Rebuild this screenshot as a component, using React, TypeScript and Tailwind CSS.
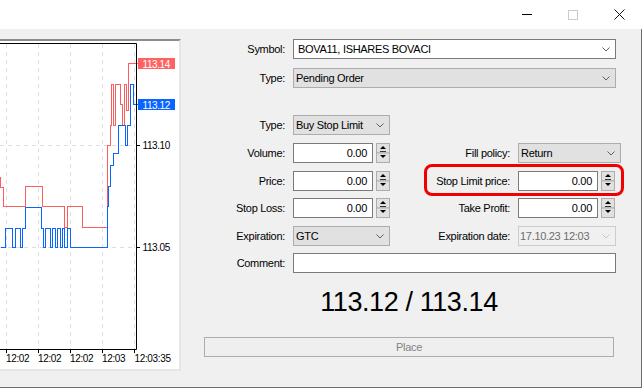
import React from 'react';

const redPath =
    'M0 176 V187 H3 V206 H25 V186 H42 V206 H64 V227 H67 V206 H82 V227 H107 V145 H110 V125 H111 V84 H113 V125 H115 V84 H120 V104 H122 V125 H124 V84 H126 V110 H128 V63 H138';

const bluePath =
    'M0 247 H5 V228 H12 V247 H15 V228 H20 V247 H22 V228 H25 V207 H41 V228 H43 V247 H45 V228 H50 V247 H52 V228 H55 V247 H57 V228 H60 V247 H62 V228 H64 V247 H67 V228 H70 V247 H107 V206 H108 V186 H110 V165 H113 V153 H118 V125 H125 V145 H127 V125 H130 V84 H133 V104 H138';

const gridX = [6, 38, 70, 102, 134];
const timeLabels = [
    { x: 6, t: '12:02' },
    { x: 38, t: '12:02' },
    { x: 70, t: '12:02' },
    { x: 102, t: '12:03' },
    { x: 134.5, t: '12:03:35' },
];

const Chart = (): JSX.Element => {
    return (
        <div className="mt-[10px] h-[332px] w-[181px] shrink-0 border-t-2 border-r-2 border-b-2 border-t-[#8c8c8c] border-r-[#e6e6e6] border-b-[#e6e6e6] bg-white">
            <svg width="179" height="328" viewBox="0 41 179 328" fontFamily="Liberation Sans, Arial, sans-serif">
                {gridX.map((x) => (
                    <line key={x} x1={x + 0.5} y1="44" x2={x + 0.5} y2="349" stroke="#dcdcdc" strokeDasharray="4 4" />
                ))}
                <line x1="0" y1="145.5" x2="136" y2="145.5" stroke="#dcdcdc" strokeDasharray="4 4" />
                <line x1="0" y1="247.5" x2="136" y2="247.5" stroke="#dcdcdc" strokeDasharray="4 4" />

                <g transform="translate(0.5 0.5)" shapeRendering="crispEdges">
                    <path d={redPath} fill="none" stroke="#ff5c5c" strokeWidth="1" />
                    <path d={bluePath} fill="none" stroke="#0a64ff" strokeWidth="1" />
                </g>

                <path d="M0 43.5 H136.5 V349.5 H0" fill="none" stroke="#000" />
                {gridX.map((x) => (
                    <line key={'t' + x} x1={x + 0.5} y1="349" x2={x + 0.5} y2="353" stroke="#000" />
                ))}
                <line x1="136" y1="145.5" x2="140" y2="145.5" stroke="#000" />
                <line x1="136" y1="247.5" x2="140" y2="247.5" stroke="#000" />

                <rect x="138" y="58" width="37" height="11" fill="#ff6262" />
                <text x="142.5" y="67.5" fontSize="10" letterSpacing="-0.4" fill="#fff">113.14</text>
                <rect x="138" y="99" width="37" height="11" fill="#0a64ff" />
                <text x="142.5" y="108.5" fontSize="10" letterSpacing="-0.4" fill="#fff">113.12</text>
                <text x="142.5" y="149" fontSize="10" letterSpacing="-0.4" fill="#000">113.10</text>
                <text x="142.5" y="251" fontSize="10" letterSpacing="-0.4" fill="#000">113.05</text>

                {timeLabels.map((l) => (
                    <text key={l.x} x={l.x} y="362" fontSize="10" letterSpacing="-0.35" fill="#000">
                        {l.t}
                    </text>
                ))}
            </svg>
        </div>
    );
};

const Chevron = ({ disabled }: { disabled?: boolean }): JSX.Element => (
    <svg width="8" height="5" viewBox="0 0 8 5" className="shrink-0">
        <path d="M0.5 0.5 L4 4 L7.5 0.5" fill="none" stroke={disabled ? '#c6c6c6' : '#5f5f5f'} />
    </svg>
);

const Spinner = (): JSX.Element => (
    <svg width="14" height="20" viewBox="0 0 14 20" className="ml-[3px] shrink-0">
        <rect x="0.5" y="0.5" width="13" height="9.5" fill="#e1e1e1" stroke="#adadad" />
        <rect x="0.5" y="10" width="13" height="9.5" fill="#e1e1e1" stroke="#adadad" />
        <polygon points="4,6 10,6 7,3" fill="#000" />
        <rect x="4" y="8" width="6" height="1" fill="#333" />
        <polygon points="4,12 10,12 7,15" fill="#000" />
    </svg>
);

class ComboProps {
    value: string;
    className: string;
}

const WhiteCombo = ({ value, className }: ComboProps): JSX.Element => (
    <div className={'flex h-[20px] items-center justify-between border border-[#7a7a7a] bg-white pl-[4px] pr-[5px] ' + className}>
        <span>{value}</span>
        <Chevron />
    </div>
);

const GrayCombo = ({ value, className }: ComboProps): JSX.Element => (
    <div className={'flex h-[20px] items-center justify-between border border-[#adadad] bg-[#e1e1e1] pl-[2px] pr-[5px] ' + className}>
        <span>{value}</span>
        <Chevron />
    </div>
);

const DisabledCombo = ({ value, className }: ComboProps): JSX.Element => (
    <div className={'flex h-[20px] items-center justify-between border border-[#cccccc] bg-[#f0f0f0] pl-[1px] pr-[5px] text-[#6d6d6d] ' + className}>
        <span>{value}</span>
        <Chevron disabled />
    </div>
);

const NumField = ({ value }: { value: string }): JSX.Element => (
    <div className="flex items-center">
        <div className="flex h-[20px] w-[80px] items-center justify-end border border-[#7a7a7a] bg-white pr-[5px]">{value}</div>
        <Spinner />
    </div>
);

const Label = ({ children }: { children: React.ReactNode }): JSX.Element => (
    <div className="w-[85px] shrink-0 text-right">{children}</div>
);

const RightLabel = ({ children }: { children: React.ReactNode }): JSX.Element => (
    <div className="w-[128px] shrink-0 pr-[8px] text-right">{children}</div>
);

const Row = ({ className, children }: { className: string; children: React.ReactNode }): JSX.Element => (
    <div className={'flex h-[20px] items-center ' + className}>{children}</div>
);

const TitleBar = (): JSX.Element => (
    <div className="flex h-[29px] justify-end bg-white">
        <div className="flex w-[46px] items-center justify-center">
            <div className="h-px w-[10px] bg-black" />
        </div>
        <div className="flex w-[46px] items-center justify-center">
            <div className="h-[10px] w-[10px] border border-[#cccccc]" />
        </div>
        <div className="flex w-[46px] items-center justify-center">
            <svg width="11" height="11" viewBox="0 0 11 11">
                <path d="M0.5 0.5 L10.5 10.5 M10.5 0.5 L0.5 10.5" stroke="#111" />
            </svg>
        </div>
    </div>
);

export default function App(): JSX.Element {
    return (
        <div className="h-[388px] w-[642px] overflow-hidden bg-[#f0f0f0] font-['Liberation_Sans',Arial,sans-serif] text-[11px] tracking-[-0.3px] text-black">
            <TitleBar />
            <div className="flex h-[359px] border-r border-b border-[#6d6d6d]">
                <Chart />
                <div className="ml-[19px] mt-[10px] flex flex-col">
                    <Row className="">
                        <Label>Symbol:</Label>
                        <WhiteCombo value="BOVA11, ISHARES BOVACI" className="ml-[8px] w-[323px]" />
                    </Row>
                    <Row className="mt-[9px]">
                        <Label>Type:</Label>
                        <GrayCombo value="Pending Order" className="ml-[8px] w-[323px]" />
                    </Row>
                    <Row className="mt-[27px]">
                        <Label>Type:</Label>
                        <GrayCombo value="Buy Stop Limit" className="ml-[8px] w-[97px]" />
                    </Row>
                    <Row className="mt-[8px]">
                        <Label>Volume:</Label>
                        <div className="ml-[8px]">
                            <NumField value="0.00" />
                        </div>
                        <RightLabel>Fill policy:</RightLabel>
                        <GrayCombo value="Return" className="w-[103px]" />
                    </Row>
                    <Row className="mt-[8px]">
                        <Label>Price:</Label>
                        <div className="ml-[8px]">
                            <NumField value="0.00" />
                        </div>
                        <div className="relative flex items-center">
                            <RightLabel>Stop Limit price:</RightLabel>
                            <NumField value="0.00" />
                            <div className="pointer-events-none absolute left-[34px] top-[-7px] h-[32px] w-[200px] rounded-[8px] border-[3px] border-[#f00000]" />
                        </div>
                    </Row>
                    <Row className="mt-[7px]">
                        <Label>Stop Loss:</Label>
                        <div className="ml-[8px]">
                            <NumField value="0.00" />
                        </div>
                        <RightLabel>Take Profit:</RightLabel>
                        <NumField value="0.00" />
                    </Row>
                    <Row className="mt-[8px]">
                        <Label>Expiration:</Label>
                        <GrayCombo value="GTC" className="ml-[8px] w-[97px]" />
                        <RightLabel>Expiration date:</RightLabel>
                        <DisabledCombo value="17.10.23 12:03" className="w-[98px]" />
                    </Row>
                    <Row className="mt-[7px]">
                        <Label>Comment:</Label>
                        <div className="ml-[8px] h-[20px] w-[323px] border border-[#7a7a7a] bg-white" />
                    </Row>
                    <div className="ml-[4px] mt-[16px] w-[410px] text-center text-[27px] leading-none tracking-[-0.4px]">
                        113.12 / 113.14
                    </div>
                    <div className="ml-[4px] mt-[21px] flex h-[20px] w-[410px] items-center justify-center border border-[#adadad] bg-[#efefef] text-[#838383]">
                        Place
                    </div>
                </div>
            </div>
        </div>
    );
}
